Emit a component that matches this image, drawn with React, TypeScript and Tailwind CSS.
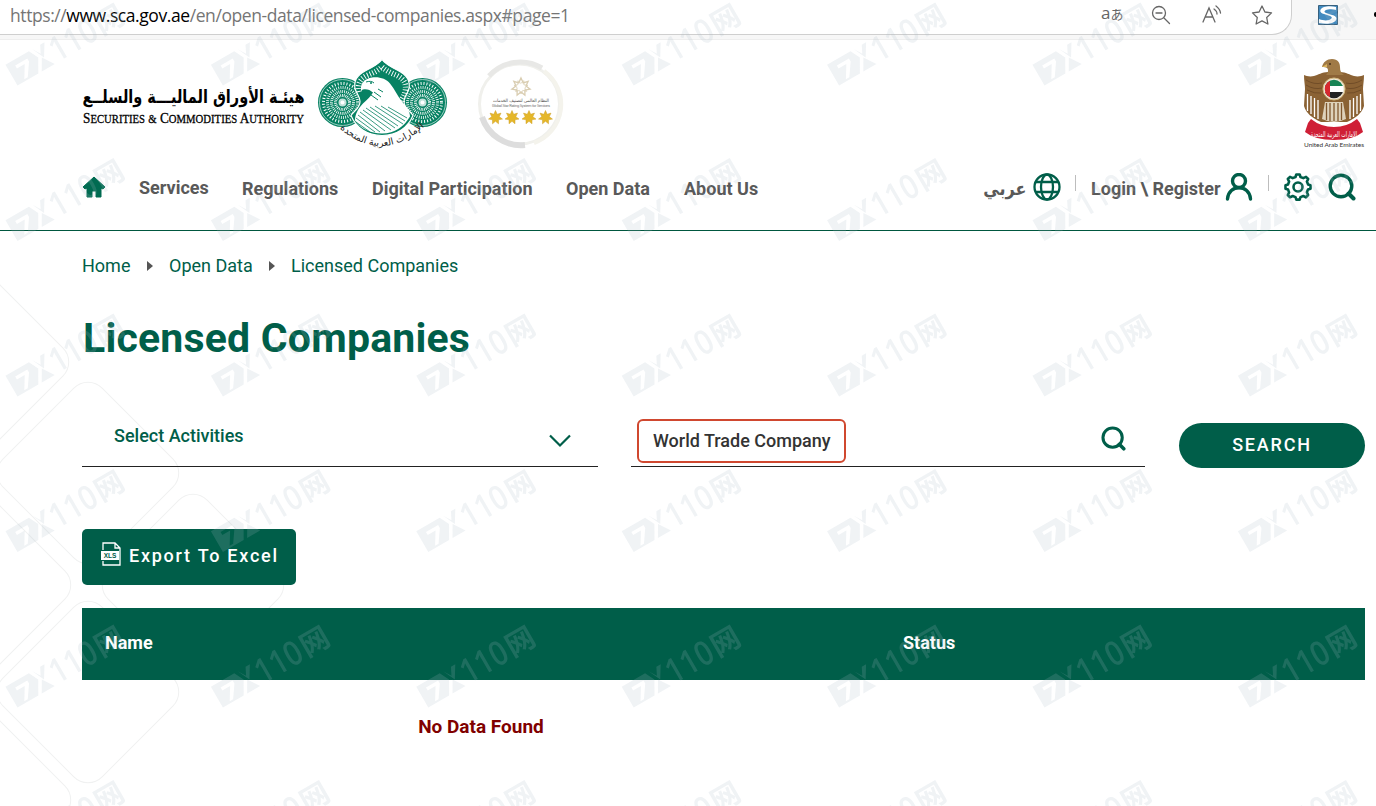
import React from 'react';

const navItems = [
  { label: 'Services', className: 'w-[103px] pb-[2px]' },
  { label: 'Regulations', className: 'w-[130px]' },
  { label: 'Digital Participation', className: 'w-[194px]' },
  { label: 'Open Data', className: 'w-[118px]' },
  { label: 'About Us', className: 'w-[90px]' },
];

const SearchIcon: React.FC<{ className: string }> = ({ className }) => (
  <svg viewBox="0 0 28 28" className={className} fill="none" stroke="#005e49" strokeWidth="3.4" strokeLinecap="round">
    <circle cx="13" cy="13" r="10.8" />
    <path d="M20.5 20.5l5 5" strokeWidth="4" />
  </svg>
);

// Rows of small petals fanned around a centre
const Rosette: React.FC<{ cx: number; cy: number }> = ({ cx, cy }) => (
  <g>
    <circle cx={cx} cy={cy} r="24.500" fill="#078263" />
    <circle cx={cx} cy={cy} r="23" fill="none" stroke="#fff" strokeWidth=".6" />
    <circle cx={cx} cy={cy} r="19" fill="none" stroke="#fff" strokeWidth="3" strokeDasharray="1 2" />
    <circle cx={cx} cy={cy} r="15" fill="none" stroke="#fff" strokeWidth="3" strokeDasharray=".8 1.4" />
    <circle cx={cx} cy={cy} r="11" fill="none" stroke="#fff" strokeWidth="3" strokeDasharray=".8 1.1" />
    <circle cx={cx} cy={cy} r="7" fill="none" stroke="#fff" strokeWidth="3" strokeDasharray=".8 .9" />
    <circle cx={cx} cy={cy} r="4" fill="#fff" fillOpacity=".75" />
    <circle cx={cx} cy={cy} r="2" fill="#fff" />
  </g>
);

const ScaLogo = () => (
  <svg viewBox="317 56 132 96" className="w-[132px] h-[96px] overflow-visible">
    <Rosette cx={342.5} cy={102.5} />
    <Rosette cx={422.5} cy={102.5} />
    <path
      d="M382 59.500c3 4.500 9 7.500 16 11 8 4 12.500 10 11 18-1.500 5.500-5 8-5 13 0 7 6 9 9 14-5 12-16 20-31 20s-26-8-31-20c3-5 9-7 9-14 0-5-3.500-7.500-5-13-1.500-8 3-14 11-18 7-3.500 13-6.500 16-11z"
      fill="#078263"
      stroke="#fff"
      strokeWidth="1.200"
    />
    <path
      d="M359 92c-2-8 1-13 8-16.500 7-3 11-5 15-8.500 4 3.500 8 5.500 15 8.500 7 3.500 10 8.500 8 16.500-1 5-4 7-4 11"
      fill="none"
      stroke="#fff"
      strokeWidth="5.500"
      strokeDasharray=".9 2"
    />
    {/* Falcon facing left */}
    <path
      d="M361 89c-.5-6 4-10.500 11-11.500 7-1 14 1 18 6 5 6 7 12 12 18 5 6 8 10 8 15-6 10-15 17-28 17-12 0-21-5-27-13 0-6 3-12 8-17 4-4 8-7 10-11-3-3-7-4-10-3-1 0-1.500 1-2 2z"
      fill="#fff"
    />
    <path d="M366 82c3-1 6-1 8 1M371 95l7 5m-4-8l7 5m-3-8l5 3" fill="none" stroke="#078263" strokeWidth="1" />
    <circle cx="371" cy="83" r="1" fill="#078263" />
    <g stroke="#078263" strokeWidth=".8" fill="none">
      <path d="M356 122l14 10M356 118l19 14M358 115l22 17M360 112l25 19M363 110l28 20M366 108l29 20M370 107l28 19M375 106l28 18M381 106l24 15M388 107l19 11" />
    </g>
    <path id="emirates-arc" d="M338 127Q382 166 426 125" fill="none" />
    <text fontFamily="DejaVu Sans, sans-serif" fontSize="9.500" fill="#222" direction="rtl" textAnchor="middle">
      <textPath href="#emirates-arc" startOffset="50%">الإمارات العربية المتحدة</textPath>
    </text>
  </svg>
);

const starPoints = '0,-7 1.7,-3.200 5.500,-4.400 3.800,-.8 7,1.600 3,2.300 3,6.300 0,3.800 -3,6.300 -3,2.300 -7,1.600 -3.800,-.8 -5.500,-4.400 -1.700,-3.200';

const StarRating = () => (
  <svg viewBox="477 58 88 92" className="w-[88px] h-[92px]">
    <circle cx="520.500" cy="104" r="40" fill="#fff" stroke="#f0f0ec" strokeWidth="3" />
    <path d="M490 76A42 42 0 0 1 543 68" fill="none" stroke="#e8e8e6" strokeWidth="5" />
    <path d="M483 117A41 41 0 0 0 526 145" fill="none" stroke="#dddddd" strokeWidth="6" />
    <path d="M545 71A41 41 0 0 1 535 143" fill="none" stroke="#f4f3ec" strokeWidth="4" />
    <g fill="none" stroke="#d9cdb1">
      <polygon points={starPoints} transform="translate(522 87) scale(1.3)" />
      <polygon points={starPoints} transform="translate(522 87) rotate(25)" strokeWidth=".7" />
    </g>
    <text x="522" y="101.500" fontSize="4.500" textAnchor="middle" textLength="56" fill="#555" fontFamily="DejaVu Sans, sans-serif">النظام العالمي لتصنيف الخدمات</text>
    <text x="522" y="106.500" fontSize="4" textAnchor="middle" textLength="58" fill="#777" fontFamily="Roboto, sans-serif">Global Star Rating System for Services</text>
    {[496.5, 513, 530, 546.5].map((x) => (
      <polygon key={x} points={starPoints} transform={`translate(${x} 117.5)`} fill="#e5b729" stroke="#cfa02a" strokeWidth=".5" />
    ))}
  </svg>
);

const UaeEmblem = () => (
  <svg viewBox="1301 56 66 96" className="w-[66px] h-[96px]">
    {/* Wings */}
    <path
      d="M1328 72c-6 0-10 3-14 4-4 1-8 0-10-1 0 6 1 10 1 14l-1 17c2 7 8 12 17 16h26c9-4 15-9 17-16l-1-17c0-4 1-8 1-14-2 1-6 2-10 1-4-1-8-4-14-4z"
      fill="#8b6234"
    />
    <g stroke="#fff" strokeWidth="1.300">
      <path d="M1307.500 94v17M1311 96v18M1314.500 98v19M1318 100v19M1360.500 94v17M1357 96v18M1353.500 98v19M1350 100v19" />
    </g>
    <g stroke="#6b4724" strokeWidth=".8" fill="none">
      <path d="M1306 80q8 5 16 3M1306 85q8 5 16 3M1307 90q8 4 14 3M1362 80q-8 5-16 3M1362 85q-8 5-16 3M1361 90q-8 4-14 3" />
    </g>
    {/* Head */}
    <path d="M1322 67c1-5 5-8 10-8 6 0 8 4 8 8 0 4 1 6 4 8h-18c2-2 3-5 1-7-1-1-3-1-5-1z" fill="#a07a46" />
    <path d="M1322 67l5-3v3z" fill="#dcb65d" />
    <circle cx="1330" cy="64" r=".9" fill="#3d2912" />
    {/* Tail */}
    <path d="M1325 102h18l3 17q-12 6-24 0z" fill="#ded2bb" />
    <path d="M1326.500 103v17M1330 103v18M1334 103v18M1338 103v18M1341.500 103v17" stroke="#80582f" strokeWidth="1.300" />
    <circle cx="1334" cy="89" r="11" fill="#efe8da" stroke="#d3b97f" strokeWidth="1" />
    <clipPath id="flag"><circle cx="1334" cy="89" r="9.300" /></clipPath>
    <g clipPath="url(#flag)">
      <path d="M1324 79h20v7h-20z" fill="#188455" />
      <path d="M1324 86h20v6h-20z" fill="#fff" />
      <path d="M1324 92h20v7h-20z" fill="#222" />
      <path d="M1324 79h6v20h-6z" fill="#d7282f" />
    </g>
    {/* Ribbon */}
    <path d="M1311 119q10 8 23 8t23-8l3 4 3 9q-10 8-29 8t-29-8l3-9z" fill="#cf1f36" />
    <text x="1334" y="136.500" textAnchor="middle" textLength="46" lengthAdjust="spacingAndGlyphs" fontSize="8" fill="#fff" fontFamily="DejaVu Sans, sans-serif">الإمارات العربية المتحدة</text>
    <text x="1334" y="147" textAnchor="middle" textLength="60" fontSize="6.500" fill="#333" fontFamily="Lato, sans-serif">United Arab Emirates</text>
  </svg>
);

const BrandText = () => (
  <svg viewBox="80 76 226 56" className="w-[226px] h-[56px]">
    <text x="193.500" y="103" textAnchor="middle" textLength="222" lengthAdjust="spacingAndGlyphs" fontSize="18" fontWeight="700" fontFamily="DejaVu Sans, sans-serif">هيئـة الأوراق الماليـــة والسلــع</text>
    <text x="83" y="122.500" textLength="221" lengthAdjust="spacingAndGlyphs" fontSize="15.500" fontFamily="Liberation Serif, serif" stroke="#000" strokeWidth=".3">
      S<tspan fontSize="12.500">ECURITIES</tspan> <tspan fontSize="12.500">&amp;</tspan> C<tspan fontSize="12.500">OMMODITIES</tspan> A<tspan fontSize="12.500">UTHORITY</tspan>
    </text>
  </svg>
);

const AddressBar = () => (
  <div className="flex h-10 bg-[#f7f7f7] border-b border-[#eeeeee]">
    <div className="flex w-[1292px] h-[35px] bg-white border-b border-r border-[#cfcfcf] rounded-br-[20px] pl-[10px]">
      <div className="w-[1091px] whitespace-nowrap font-['Open_Sans',sans-serif] text-[17.500px] leading-[30px] tracking-[-0.42px] text-[#757575]">
        https://<span className="text-black">www.sca.gov.ae</span>/en/open-data/licensed-companies.aspx#page=1
      </div>
      <div className="flex w-[22px] items-baseline text-[#666] leading-[26px] whitespace-nowrap">
        <span className="font-['Open_Sans',sans-serif] text-[17px]">a</span>
        <span className="font-['Noto_Sans_CJK_JP',sans-serif] text-[13px]">あ</span>
      </div>
      <svg viewBox="0 0 20 20" className="ml-[28px] mt-[5px] w-5 h-5" fill="none" stroke="#666" strokeWidth="1.300" strokeLinecap="round">
        <circle cx="8" cy="8" r="6.500" />
        <path d="M5 8h6M13 13l5.500 5.500" />
      </svg>
      <svg viewBox="0 0 22 20" className="ml-[30px] mt-[5px] w-[22px] h-5" fill="none" stroke="#666" strokeWidth="1.300" strokeLinecap="round">
        <path d="M2 17L8 3l6 14M4.500 12h7M13 4q3 2 3 5M15 1q4 3 4.500 7" />
      </svg>
      <svg viewBox="0 0 22 20" className="ml-[28px] mt-[5px] w-[22px] h-5" fill="none" stroke="#666" strokeWidth="1.300" strokeLinejoin="round">
        <path d="M11 1l2.900 6 6.600.9-4.800 4.600 1.200 6.500-5.900-3.100L5.100 19l1.200-6.500L1.500 7.900 8.100 7z" />
      </svg>
    </div>
    <svg viewBox="0 0 20 20" className="ml-[26px] mt-[5px] w-5 h-5">
      <path d="M.5.5h19v19H.5z" fill="#428abf" stroke="#38617e" />
      <path d="M18 2c-4-1-9-1-12 0-5 2-5 6 0 7l6 2c3 1 2 3-1 4-3 .8-6 .5-10-1v4c5 1 10 1 13 0 6-2 6-7 0-8l-6-2C5 7 7 5 10 4.500c3-.5 5-.3 8 .5z" fill="#fff" />
    </svg>
    <span className="ml-auto mt-[12px] h-[5px] w-[2px] rounded-l bg-black" />
  </div>
);

const Backdrop = () => (
  <svg viewBox="0 0 340 766" className="absolute left-0 top-0 w-[340px] h-[766px] -z-10" fill="none" stroke="#f0f1f1">
    {[[-22, 322], [88, 433], [-20, 545], [193, 545], [88, 652], [-20, 760]].map(([x, y]) => (
      <rect key={`${x}-${y}`} x={x - 70} y={y - 70} width="140" height="140" rx="20" transform={`rotate(45 ${x} ${y})`} />
    ))}
  </svg>
);

const Watermark = () => (
  <svg viewBox="0 0 1376 806" className="absolute inset-0 w-full h-full pointer-events-none">
    <defs>
      <g id="mark" transform="rotate(-30)" fill="#a9bac8">
        <path fillRule="evenodd" d="M0-24H27L32-14 24 0H0zM8-18.500V-15H17L9-2H13L22-15V-18.500z" />
        <path d="M28 0l7-12 8 12zM31-24l5 8 4-8h5l-8 13z" />
        <text x="46" y="0" textLength="50" lengthAdjust="spacingAndGlyphs" fontSize="34" fontWeight="600" fontFamily="Open Sans, sans-serif">110</text>
        <text x="98" y="-1" fontSize="29" fontWeight="700" fontFamily="Noto Sans CJK SC, sans-serif">网</text>
      </g>
    </defs>
    <g opacity=".18">
      {[0, 1, 2, 3, 4, 5].map((row) =>
        [0, 1, 2, 3, 4, 5, 6].map((col) => (
          <use key={`${row}-${col}`} href="#mark" x={17.5 + col * 205.4} y={85.5 + row * 155.5} />
        ))
      )}
    </g>
  </svg>
);

export default function App() {
  return (
    <div className="relative w-[1376px] h-[806px] overflow-hidden bg-white font-['Roboto',sans-serif]">
      <AddressBar />

      <div className="relative z-0 h-[766px]">
        <Backdrop />

        <header className="h-[191px] border-b border-[#00573f]">
          <div className="flex pt-4 pl-[80px] pr-[9px] h-[116px]">
            <div className="pt-5"><BrandText /></div>
            <div className="ml-[11px]"><ScaLogo /></div>
            <div className="ml-[27px] pt-[2px]"><StarRating /></div>
            <div className="ml-auto"><UaeEmblem /></div>
          </div>

          <div className="flex items-center h-[62px] pl-[82px] pr-[20px] text-[18px] font-bold text-[#595959] whitespace-nowrap">
            <svg viewBox="0 0 24 22" className="w-6 h-[22px] mr-[33px]">
              <path d="M12 1l11 10-2 2-2-1v9h-5v-6h-4v6H5v-9l-2 1-2-2z" fill="#006b51" stroke="#006b51" strokeLinejoin="round" />
            </svg>
            <nav className="flex items-center pt-[2px]">
              {navItems.map(({ label, className }) => (
                <a key={label} className={className}>{label}</a>
              ))}
            </nav>
            <div className="flex items-center ml-auto">
              <span className="mr-[7px] pt-[2px] text-[18px] font-['DejaVu_Sans',sans-serif] origin-right scale-x-[.89]" dir="rtl">عربي</span>
              <svg viewBox="0 0 28 28" className="w-7 h-7" fill="none" stroke="#005e49" strokeWidth="2.300">
                <circle cx="14" cy="14" r="12.500" />
                <ellipse cx="14" cy="14" rx="6" ry="12.500" />
                <path d="M3 9h22M3 19h22" />
              </svg>
              <span className="ml-[14px] mr-[15px] mb-2 w-px h-4 bg-[#bdbdbd]" />
              <span className="w-[130px] pt-[3px]">Login \ Register</span>
              <svg viewBox="0 0 28 28" className="ml-[4px] w-7 h-7" fill="none" stroke="#005e49" strokeWidth="3.400" strokeLinecap="round">
                <circle cx="14" cy="8" r="6.500" />
                <path d="M2.500 26c1-15 22-15 23 0" />
              </svg>
              <span className="ml-[15px] mr-[15px] mb-2 w-px h-4 bg-[#bdbdbd]" />
              <svg viewBox="0 0 28 28" className="w-7 h-7" fill="none" stroke="#005e49" strokeWidth="2.600" strokeLinejoin="round">
                <path d="M11.500 4l.8-2.500h3.400l.8 2.500 2.800 1.100L22 3.900 24.200 6l-1.300 2.600 1.200 2.900 2.400.8v3.400l-2.500.8-1.100 2.800 1.200 2.700-2.200 2.300-2.600-1.300-2.800 1.100-.8 2.500h-3.400l-.8-2.500-2.800-1.100L6 24.300 3.800 22l1.300-2.600L4 16.500l-2.500-.8v-3.400l2.500-.8 1.100-2.900L3.800 6 6 3.900l2.700 1.200z" />
                <circle cx="14" cy="14" r="4.500" />
              </svg>
              <SearchIcon className="ml-[16px] w-7 h-7" />
            </div>
          </div>
        </header>

        <main className="pl-[82px] pr-[11px]">
          <div className="flex items-center pt-[21px] text-[18px] leading-7 text-[#005e49] whitespace-nowrap">
            <span className="w-[65px]">Home</span>
            <span className="w-[22px]"><i className="block w-0 border-y-[5px] border-l-[6px] border-y-transparent border-l-[#555]" /></span>
            <span className="w-[100px]">Open Data</span>
            <span className="w-[22px]"><i className="block w-0 border-y-[5px] border-l-[6px] border-y-transparent border-l-[#555]" /></span>
            <span>Licensed Companies</span>
          </div>

          <h1 className="mt-[34px] pl-px text-[41px] leading-[48px] tracking-[0.2px] font-bold text-[#005e49] whitespace-nowrap">Licensed Companies</h1>

          <div className="flex mt-[45px]">
            <div className="flex justify-between w-[516px] h-[60px] border-b border-[#222] pl-[32px] pr-[27px] text-[18px] font-medium text-[#005e49]">
              <span className="pt-[15px]">Select Activities</span>
              <svg viewBox="0 0 22 14" className="mt-[27px] w-[22px] h-[14px]" fill="none" stroke="#005e49" strokeWidth="2.200">
                <path d="M1 1.500l10 10 10-10" />
              </svg>
            </div>
            <div className="flex justify-between ml-[33px] w-[514px] h-[60px] border-b border-[#222] pl-[6px] pr-[19px]">
              <div className="mt-[12px] w-[209px] h-[44px] border-2 border-[#d0482f] rounded-[6px] pl-[14px] text-[18px] leading-[40px] font-medium text-[#333] whitespace-nowrap">
                World Trade Company
              </div>
              <SearchIcon className="mt-[19px] w-[25px] h-[25px]" />
            </div>
            <button className="ml-[34px] mt-[16px] w-[186px] h-[45px] rounded-full bg-[#005e49] pb-[3px] text-[18px] font-medium tracking-[1.8px] text-white">
              SEARCH
            </button>
          </div>

          <button className="flex items-center mt-[61px] w-[214px] h-[56px] rounded-[5px] bg-[#005e49] pl-[18px] pb-[4px] text-[18px] font-medium tracking-[1.750px] text-white whitespace-nowrap">
            <svg viewBox="0 0 22 24" className="w-[22px] h-6 mr-[7px] mb-[2px] shrink-0" fill="none" stroke="#fff" strokeWidth="1.300">
              <path d="M3 8V1h12l5 5v17H3v-4M15 1v5h5" />
              <path d="M1 9h18v9H1z" fill="#fff" stroke="none" />
              <text x="10" y="16" textAnchor="middle" fontSize="6.500" fontWeight="700" letterSpacing="0" fill="#005e49" stroke="none" fontFamily="Liberation Sans, sans-serif">XLS</text>
            </svg>
            Export To Excel
          </button>

          <div className="mt-[23px] flex items-center h-[72px] bg-[#005e49] pl-[23px] pb-[4px] text-[18px] font-bold text-white">
            <span className="w-[798px]">Name</span>
            <span>Status</span>
          </div>
          <p className="w-[798px] pt-[33px] text-center text-[19px] font-bold text-[#800000]">No Data Found</p>
        </main>
      </div>

      <Watermark />
    </div>
  );
}
